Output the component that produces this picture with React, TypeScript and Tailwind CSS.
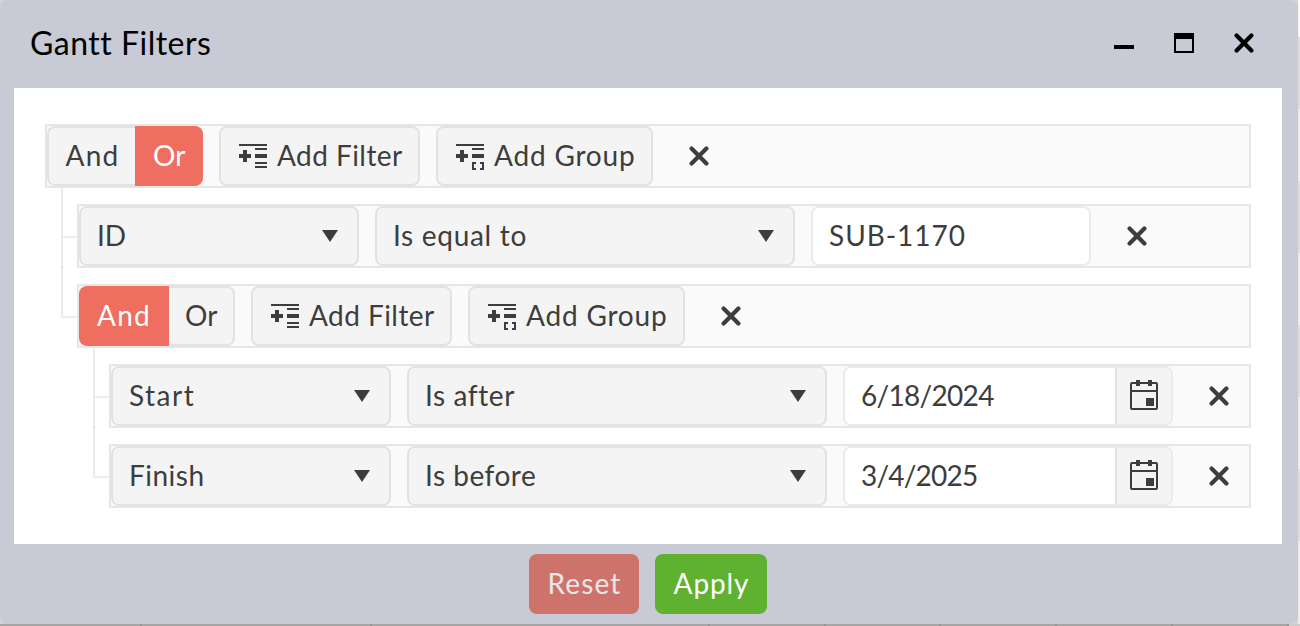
import type { ReactNode } from "react";

function CloseIcon() {
  return (
    <svg width="20" height="20" viewBox="0 0 20 20" fill="none" stroke="currentColor" strokeWidth="4.2" strokeLinecap="round">
      <path d="M2.6 2.6 17.4 17.4M17.4 2.6 2.6 17.4" />
    </svg>
  );
}

function AddIcon({ group = false }: { group?: boolean }) {
  return (
    <svg width="32" height="32" viewBox="0 0 32 32" fill="currentColor" shapeRendering="crispEdges" className="shrink-0">
      <path d="M2 4h28v2H2zM18 8h12v2H18zM18 14h12v4H18zM6 10h4v4h4v4h-4v4H6v-4H2v-4h4z" />
      {group ? (
        <path d="M18 22h4v2h-2v4h2v2h-4zM26 22h4v8h-4v-2h2v-4h-2z" />
      ) : (
        <path d="M18 22h12v2H18zM18 26h12v2H18z" />
      )}
    </svg>
  );
}

function CalendarIcon() {
  return (
    <svg width="32" height="32" viewBox="0 0 32 32" fill="currentColor">
      <rect x="3" y="3" width="26" height="26" rx="1" fill="none" stroke="currentColor" strokeWidth="2" />
      <path d="M8 0h4v6H8zM20 0h4v6h-4zM3 10h26v2H3zM18 18h8v8h-8z" />
    </svg>
  );
}

function Row({ children }: { children: ReactNode }) {
  return (
    <div className="flex h-16 w-full gap-4 border-2 border-[#e6e6e6] bg-[#fafafa]">{children}</div>
  );
}

function RemoveButton() {
  return (
    <button aria-label="Remove" className="flex w-[60px] items-center justify-center">
      <CloseIcon />
    </button>
  );
}

function Select({ children, wide = false }: { children: ReactNode; wide?: boolean }) {
  return (
    <div
      className={`flex h-[60px] shrink-0 items-center justify-between rounded-lg border-2 border-[#e2e2e2] bg-[#f4f4f4] pr-[19px] pl-4 ${wide ? "w-[420px]" : "w-[280px]"}`}
    >
      <span className="pb-0.5">{children}</span>
      <svg width="16" height="12" viewBox="0 0 16 12" fill="currentColor">
        <path d="M0 0h16L8 12z" />
      </svg>
    </div>
  );
}

function GroupRow({ selected }: { selected: "And" | "Or" }) {
  const and = selected === "And";
  return (
    <Row>
      <div className="flex">
        <button
          className={`rounded-l-lg pb-0.5 text-left tracking-[1.3px] ${and ? "w-[90px] bg-[#ee6e5f] pl-[18px] text-white" : "w-[88px] border-2 border-r-0 border-[#e2e2e2] bg-[#f4f4f4] pl-[16.5px]"}`}
        >
          And
        </button>
        <button
          className={`rounded-r-lg pb-0.5 text-left ${and ? "w-[66px] border-2 border-l-0 border-[#e2e2e2] bg-[#f4f4f4] pl-4" : "w-[68px] bg-[#ee6e5f] pl-[18px] text-white"}`}
        >
          Or
        </button>
      </div>
      <button className="flex w-[201px] items-center gap-2 rounded-lg border-2 border-[#e2e2e2] bg-[#f4f4f4] pl-4 whitespace-nowrap">
        <AddIcon />
        <span className="pb-0.5 tracking-[0.45px]">Add Filter</span>
      </button>
      <button className="flex w-[217px] items-center gap-2 rounded-lg border-2 border-[#e2e2e2] bg-[#f4f4f4] pl-4 whitespace-nowrap">
        <AddIcon group />
        <span className="pb-0.5 tracking-[0.8px]">Add Group</span>
      </button>
      <RemoveButton />
    </Row>
  );
}

function Branch({ children, last = false }: { children: ReactNode; last?: boolean }) {
  return (
    <div className="flex">
      <div className="flex w-4 shrink-0 flex-col">
        <div className="h-[50px] border-b-2 border-l-2 border-[#ebebeb]" />
        {!last && <div className="h-7 w-0.5 bg-[#ebebeb]" />}
        {!last && <div className="h-0.5 w-0.5 bg-[#dddddd]" />}
      </div>
      <div className="min-w-0 flex-1 pt-4">{children}</div>
    </div>
  );
}

function DateRow({ field, operator, date }: { field: ReactNode; operator: ReactNode; date: ReactNode }) {
  return (
    <Row>
      <Select>{field}</Select>
      <Select wide>{operator}</Select>
      <div className="flex w-[330px] overflow-hidden rounded-lg border-2 border-[#ebebeb] bg-white">
        <div className="flex flex-1 items-center pb-0.5 pl-4">{date}</div>
        <button aria-label="Open calendar" className="flex w-14 items-center justify-center border-l-2 border-[#e2e2e2] bg-[#f4f4f4]">
          <CalendarIcon />
        </button>
      </div>
      <RemoveButton />
    </Row>
  );
}

/* Slivers of the grid that stay visible behind the dialog's right and bottom edges. */
function GridRightEdge() {
  return (
    <div className="flex w-0.5 flex-col bg-[#ececec]">
      <div className="h-[37px] bg-[#f6f6f6]" />
      <div className="h-[72px] bg-[#dedede]" />
      <div className="mt-[72px] h-[72px] bg-[#dedede]" />
      <div className="mt-[72px] h-[72px] bg-[#dedede]" />
      <div className="mt-[72px] h-[72px] bg-[#dedede]" />
    </div>
  );
}

function GridBottomEdge() {
  return (
    <div className="flex h-0.5 bg-[#a6a6a6]">
      <div className="w-[142px] border-r-2 border-[#969696]" />
      <div className="w-[230px] border-r-2 border-[#969696]" />
      <div className="w-[338px] border-r-2 border-[#969696]" />
      <div className="w-[116px] border-r-2 border-[#969696]" />
      <div className="w-[115px] border-r-2 border-[#969696]" />
      <div className="w-[116px] border-r-2 border-[#969696]" />
      <div className="w-[116px] border-r-2 border-[#969696]" />
      <div className="w-[116px] border-r-2 border-[#969696]" />
      <div className="flex-1 bg-[#cccccc]" />
    </div>
  );
}

export default function App() {
  return (
    <div className="flex h-[626px] w-[1300px] flex-col overflow-hidden bg-[#d4d4d4] font-['Lato',sans-serif] text-[28px] leading-9 text-[#3d3d3d]">
      <div className="flex h-[624px]">
        <div className="flex w-[1298px] flex-col rounded-lg bg-[#c8cad6]">
          <header className="flex h-[88px] shrink-0 items-center justify-between pr-[44px] pb-0.5 pl-[30px] text-black">
            <h1 className="text-[32px] tracking-[0.5px]">Gantt Filters</h1>
            <div className="flex gap-10">
              <button aria-label="Minimize">
                <svg width="20" height="20" viewBox="0 0 20 20"><path d="M0 12h20v4H0z" /></svg>
              </button>
              <button aria-label="Maximize">
                <svg width="20" height="20" viewBox="0 0 20 20" fillRule="evenodd"><path d="M0 0h20v20H0zM2 6v12h16V6z" /></svg>
              </button>
              <button aria-label="Close"><CloseIcon /></button>
            </div>
          </header>
          <main className="ml-[14px] h-[456px] w-[1268px] shrink-0 bg-white px-[31px] pt-9">
            <GroupRow selected="Or" />
            <div className="pl-4">
              <Branch>
                <Row>
                  <Select>ID</Select>
                  <Select wide><span className="tracking-[0.7px]">Is equal to</span></Select>
                  <div className="flex w-[280px] items-center rounded-lg border-2 border-[#ebebeb] bg-white pb-0.5 pl-4">
                    <span className="tracking-[0.95px]">SUB-1170</span>
                  </div>
                  <RemoveButton />
                </Row>
              </Branch>
              <Branch last>
                <GroupRow selected="And" />
                <div className="pl-4">
                  <Branch>
                    <DateRow
                      field={<span className="tracking-[1.5px]">Start</span>}
                      operator={<span className="tracking-[0.6px]">Is after</span>}
                      date={<span className="tracking-[-0.7px]">6/18/2024</span>}
                    />
                  </Branch>
                  <Branch last>
                    <DateRow
                      field={<span className="tracking-[0.5px]">Finish</span>}
                      operator={<span className="tracking-[0.5px]">Is before</span>}
                      date={<span className="tracking-[-0.8px]">3/4/2025</span>}
                    />
                  </Branch>
                </div>
              </Branch>
            </div>
          </main>
          <footer className="flex justify-center gap-4 pt-[10px] pr-0.5">
            <button className="h-[60px] w-[110px] rounded-lg bg-[#ce736c] pb-0.5 pl-px text-[#e9e6ea]">
              <span className="tracking-[1.1px]">Reset</span>
            </button>
            <button className="h-[60px] w-[112px] rounded-lg bg-[#5eb131] pb-0.5 pl-px text-white">
              <span className="tracking-[0.9px]">Apply</span>
            </button>
          </footer>
        </div>
        <GridRightEdge />
      </div>
      <GridBottomEdge />
    </div>
  );
}
